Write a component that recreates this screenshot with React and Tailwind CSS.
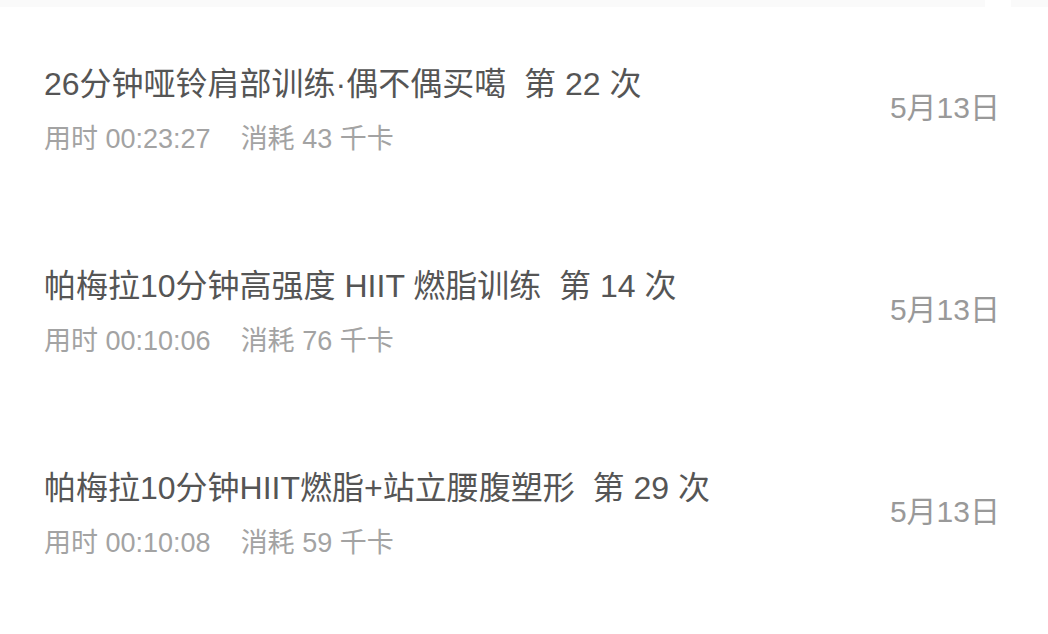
import React from "react";

const records = [
  { title: "26分钟哑铃肩部训练·偶不偶买噶", count: 22, time: "00:23:27", kcal: 43, date: "5月13日" },
  { title: "帕梅拉10分钟高强度 HIIT 燃脂训练", count: 14, time: "00:10:06", kcal: 76, date: "5月13日" },
  { title: "帕梅拉10分钟HIIT燃脂+站立腰腹塑形", count: 29, time: "00:10:08", kcal: 59, date: "5月13日" },
];

const font = { fontFamily: '"Liberation Sans", "Noto Sans CJK SC", sans-serif' };

export default function App() {
  return (
    <div className="w-[1048px] h-[634px] bg-white overflow-hidden" style={font}>
      {/* faint strip left from the list above */}
      <div className="flex h-[7px]">
        <div className="w-[985px] bg-[#fafafa]" />
        <div className="w-[26px]" />
        <div className="flex-1 bg-[#fafafa]" />
      </div>

      {records.map((r, i) => (
        <div key={i} className="h-[202px] flex items-center pl-[44px] pr-[48px] pt-[4px]">
          <div className="flex-1">
            <div className="text-[32px] leading-[40px] text-[#555555] whitespace-nowrap">
              {r.title}&nbsp; 第 {r.count} 次
            </div>
            <div className="mt-[18px] text-[27px] leading-[34px] text-[#a3a3a3] whitespace-nowrap">
              用时 {r.time}
              <span className="ml-[30px]">消耗 {r.kcal} 千卡</span>
            </div>
          </div>
          <div className="text-[30px] text-[#999999] -mt-[6px]">{r.date}</div>
        </div>
      ))}
    </div>
  );
}
